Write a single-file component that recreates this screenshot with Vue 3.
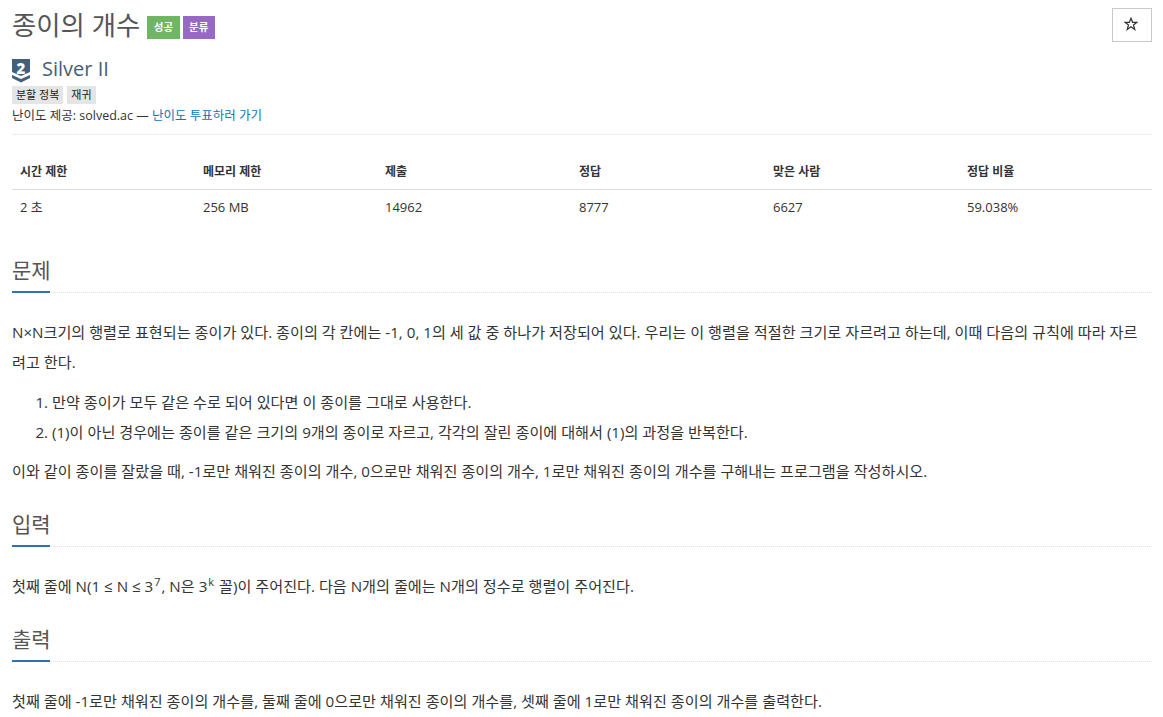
<template>
  <div class="page">
    <div class="title-row">
      <h1>종이의 개수</h1>
      <span class="label green">성공</span>
      <span class="label purple">분류</span>
      <button class="star">
        <svg width="14" height="14" viewBox="0 0 14 14">
          <path d="M7 1.2L8.6 5.3H13L9.5 8L10.8 12.5L7 9.8L3.2 12.5L4.5 8L1 5.3H5.4Z" fill="none" stroke="#333333" stroke-width="1.2" />
        </svg>
      </button>
    </div>

    <div class="tier">
      <svg class="tier-icon" width="18" height="24" viewBox="0 0 18 24">
        <path d="M0 0H18V13L9 17L0 13Z" fill="#435f7a" />
        <path d="M0 16L9 20L18 16V19L9 23.5L0 19Z" fill="#435f7a" />
        <text x="9" y="15" text-anchor="middle" class="tier-num">2</text>
      </svg>
      <span class="tier-name">Silver II</span>
    </div>

    <div class="tags">
      <span class="tag">분할 정복</span>
      <span class="tag">재귀</span>
    </div>
    <div class="credit">난이도 제공: solved.ac — <a>난이도 투표하러 가기</a></div>

    <table class="info">
      <thead>
        <tr>
          <th v-for="h in heads" :key="h.name" :style="{ width: h.width + 'px' }">{{ h.name }}</th>
        </tr>
      </thead>
      <tbody>
        <tr>
          <td v-for="h in heads" :key="h.name">{{ h.value }}</td>
        </tr>
      </tbody>
    </table>

    <section class="first">
      <div class="headline"><h2>문제</h2></div>
      <p class="wrapped">N×N크기의 행렬로 표현되는 종이가 있다. 종이의 각 칸에는 -1, 0, 1의 세 값 중 하나가 저장되어 있다. 우리는 이 행렬을 적절한 크기로 자르려고 하는데, 이때 다음의 규칙에 따라 자르려고 한다.</p>
      <ol>
        <li>만약 종이가 모두 같은 수로 되어 있다면 이 종이를 그대로 사용한다.</li>
        <li>(1)이 아닌 경우에는 종이를 같은 크기의 9개의 종이로 자르고, 각각의 잘린 종이에 대해서 (1)의 과정을 반복한다.</li>
      </ol>
      <p>이와 같이 종이를 잘랐을 때, -1로만 채워진 종이의 개수, 0으로만 채워진 종이의 개수, 1로만 채워진 종이의 개수를 구해내는 프로그램을 작성하시오.</p>
    </section>

    <section>
      <div class="headline"><h2>입력</h2></div>
      <p>첫째 줄에 N(1 ≤ N ≤ 3<sup>7</sup>, N은 3<sup>k</sup> 꼴)이 주어진다. 다음 N개의 줄에는 N개의 정수로 행렬이 주어진다.</p>
    </section>

    <section>
      <div class="headline"><h2>출력</h2></div>
      <p>첫째 줄에 -1로만 채워진 종이의 개수를, 둘째 줄에 0으로만 채워진 종이의 개수를, 셋째 줄에 1로만 채워진 종이의 개수를 출력한다.</p>
    </section>
  </div>
</template>

<script setup>
const heads = [
  { name: '시간 제한', value: '2 초', width: 183 },
  { name: '메모리 제한', value: '256 MB', width: 182 },
  { name: '제출', value: '14962', width: 194 },
  { name: '정답', value: '8777', width: 194 },
  { name: '맞은 사람', value: '6627', width: 194 },
  { name: '정답 비율', value: '59.038%', width: 193 }
]
</script>

<style>
html, body {
  margin: 0;
  background: #ffffff;
  overflow: hidden;
}
</style>

<style scoped>
.page {
  height: 717px;
  overflow: hidden;
  padding: 0 11px 0 12px;
  box-sizing: border-box;
  font-family: "Open Sans", "Noto Sans CJK KR", sans-serif;
  font-size: 15.15px;
  color: #333333;
}

.title-row {
  display: flex;
  align-items: center;
  height: 46px;
  padding-top: 4px;
  box-sizing: border-box;
}

h1 {
  margin: 0 7px 0 0;
  font-size: 26.4px;
  font-weight: 400;
  color: #555555;
  line-height: 36px;
}

.label {
  margin: 5px 3px 0 0;
  padding: 0 6.5px;
  height: 23px;
  line-height: 23px;
  font-size: 10.5px;
  font-weight: 700;
  color: #ffffff;
}

.green {
  background: #6fb563;
}

.purple {
  background: #9768c4;
}

.star {
  display: flex;
  align-items: center;
  justify-content: center;
  margin-left: auto;
  width: 40px;
  height: 34px;
  border: 1px solid #c8c8c8;
  background: #ffffff;
  padding: 0 2px 3px 0;
}

.tier {
  display: flex;
  align-items: center;
  height: 24px;
  margin-top: 10px;
}

.tier-icon {
  align-self: flex-start;
  margin: 3px 12px 0 0;
  overflow: visible;
}

.tier-num {
  font-family: "Open Sans", sans-serif;
  font-size: 15px;
  font-weight: 800;
  fill: #ffffff;
}

.tier-name {
  font-size: 20px;
  color: #435f7a;
}

.tags {
  display: flex;
  gap: 4px;
  margin-top: 6px;
}

.tag {
  background: #e5e5e5;
  padding: 0 4px;
  height: 18px;
  line-height: 18px;
  font-size: 11px;
  color: #222222;
}

.credit {
  font-size: 12.5px;
  line-height: 17px;
  margin-top: 3px;
  padding-bottom: 10px;
  border-bottom: 1px solid #eeeeee;
}

.credit a {
  color: #0f74ba;
}

.info {
  width: 100%;
  border-collapse: collapse;
  table-layout: fixed;
  margin-top: 19px;
  font-size: 13px;
}

.info th {
  text-align: left;
  font-size: 12px;
  font-weight: 700;
  height: 35px;
  padding: 0 8px;
  border-bottom: 1px solid #dddddd;
  box-sizing: border-box;
}

.info td {
  height: 35px;
  padding: 0 8px;
  box-sizing: border-box;
}

section {
  margin-top: 21.5px;
}

section.first {
  margin-top: 30px;
}

.headline {
  border-bottom: 1px dotted #e0e0e0;
  margin-bottom: 25px;
  height: 38px;
}

h2 {
  display: inline-block;
  margin: 0;
  line-height: 32px;
  font-size: 21px;
  font-weight: 400;
  color: #555555;
  border-bottom: 2px solid #3070b5;
  height: 37px;
  width: 38px;
  white-space: nowrap;
}

p {
  margin: 0 0 10px;
  line-height: 29.5px;
  word-break: break-all;
}

.wrapped {
  padding-right: 5px;
}

ol {
  margin: 0 0 10px;
  padding-left: 40px;
  line-height: 30px;
}

sup {
  font-size: 11px;
  line-height: 0;
  margin: 0 1px;
}
</style>
